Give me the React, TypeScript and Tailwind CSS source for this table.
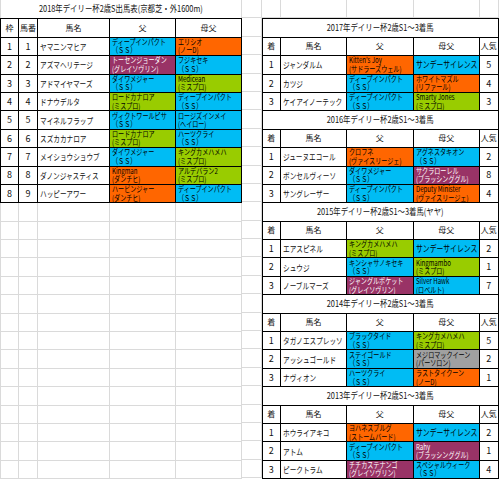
import React from "react";

type Sire = [string, string, string];

const colorClass: Record<string, string> = {
  c: "bg-[#00bcf4] text-black",
  o: "bg-[#ff6600] text-black",
  g: "bg-[#99cc00] text-black",
  p: "bg-[#993366] text-white",
  y: "bg-[#a0a0a0] text-black",
};

const SS = "（ＳＳ）";

const leftRows: [string, string, string, Sire, Sire][] = [
  ["1", "1", "ヤマニンマヒア", ["ディープインパクト", SS, "c"], ["エリシオ", "(ノーD)", "o"]],
  ["2", "2", "アズマヘリテージ", ["トーセンジョーダン", "(グレイソヴリン)", "p"], ["フジキセキ", SS, "c"]],
  ["3", "3", "アドマイヤマーズ", ["ダイワメジャー", SS, "c"], ["Medicean", "(ミスプロ)", "g"]],
  ["4", "4", "ドナウデルタ", ["ロードカナロア", "(ミスプロ)", "g"], ["ディープインパクト", SS, "c"]],
  ["5", "5", "マイネルフラップ", ["ヴィクトワールピサ", SS, "c"], ["ロージズインメイ", "(ヘイロー)", "c"]],
  ["6", "6", "スズカカナロア", ["ロードカナロア", "(ミスプロ)", "g"], ["ハーツクライ", SS, "c"]],
  ["7", "7", "メイショウショウブ", ["ダイワメジャー", SS, "c"], ["キングカメハメハ", "(ミスプロ)", "g"]],
  ["8", "8", "ダノンジャスティス", ["Kingman", "(ダンチヒ)", "o"], ["アルデバラン2", "(ミスプロ)", "g"]],
  ["8", "9", "ハッピーアワー", ["ハービンジャー", "(ダンチヒ)", "o"], ["ディープインパクト", SS, "c"]],
];

type RRow = [string, string, Sire, Sire, string];

const blocks: { title: string; rows: RRow[] }[] = [
  {
    title: "2017年デイリー杯2歳S1～3着馬",
    rows: [
      ["1", "ジャンダルム", ["Kitten's Joy", "(サドラーズウェル)", "o"], ["サンデーサイレンス", "", "c"], "5"],
      ["2", "カツジ", ["ディープインパクト", SS, "c"], ["ホワイトマズル", "(リファール)", "o"], "4"],
      ["3", "ケイアイノーテック", ["ディープインパクト", SS, "c"], ["Smarty Jones", "(ミスプロ)", "g"], "3"],
    ],
  },
  {
    title: "2016年デイリー杯2歳S1～3着馬",
    rows: [
      ["1", "ジューヌエコール", ["クロフネ", "(ヴァイスリージェ)", "o"], ["アグネスタキオン", SS, "c"], "2"],
      ["2", "ボンセルヴィーソ", ["ダイワメジャー", SS, "c"], ["サクラローレル", "(ブラッシンググル)", "p"], "8"],
      ["3", "サングレーザー", ["ディープインパクト", SS, "c"], ["Deputy Minister", "(ヴァイスリージェ)", "o"], "4"],
    ],
  },
  {
    title: "2015年デイリー杯2歳S1～3着馬(ヤヤ)",
    rows: [
      ["1", "エアスピネル", ["キングカメハメハ", "(ミスプロ)", "g"], ["サンデーサイレンス", "", "c"], "2"],
      ["2", "シュウジ", ["キンシャサノキセキ", SS, "c"], ["Kingmambo", "(ミスプロ)", "g"], "1"],
      ["3", "ノーブルマーズ", ["ジャングルポケット", "(グレイソヴリン)", "p"], ["Silver Hawk", "(ロベルト)", "c"], "7"],
    ],
  },
  {
    title: "2014年デイリー杯2歳S1～3着馬",
    rows: [
      ["1", "タガノエスプレッソ", ["ブラックタイド", SS, "c"], ["キングカメハメハ", "(ミスプロ)", "g"], "5"],
      ["2", "アッシュゴールド", ["ステイゴールド", SS, "c"], ["メジロマックイーン", "(パーソロン)", "y"], "2"],
      ["3", "ナヴィオン", ["ハーツクライ", SS, "c"], ["ラストタイクーン", "(ノーD)", "o"], "1"],
    ],
  },
  {
    title: "2013年デイリー杯2歳S1～3着馬",
    rows: [
      ["1", "ホウライアキコ", ["ヨハネスブルグ", "(ストームバード)", "o"], ["サンデーサイレンス", "", "c"], "2"],
      ["2", "アトム", ["ディープインパクト", SS, "c"], ["Rahy", "(ブラッシンググル)", "p"], "1"],
      ["3", "ピークトラム", ["チチカステナンゴ", "(グレイソヴリン)", "p"], ["スペシャルウィーク", SS, "c"], "4"],
    ],
  },
];

function SireCell({ s }: { s: Sire }) {
  const [a, b, c] = s;
  if (!b) {
    return (
      <div className={`${colorClass[c]} border-r border-b border-black flex items-center pl-[2px] text-[9px] leading-[10px] whitespace-nowrap overflow-hidden`}>
        <span className="inline-block origin-left scale-x-[0.76]">{a}</span>
      </div>
    );
  }
  return (
    <div className={`${colorClass[c]} border-r border-b border-black flex flex-col justify-center items-start pl-[2px] text-[8px] leading-[8.5px] whitespace-nowrap overflow-hidden`}>
      <span className="inline-block origin-left scale-x-[0.76]">{a}</span>
      <span className="inline-block origin-left scale-x-[0.76]">{b}</span>
    </div>
  );
}

const bk = "border-r border-b border-black flex items-center";
const gl = "border-r border-b border-[#dadada]";

function Name({ t }: { t: string }) {
  return (
    <div className={`${bk} pl-[2px] whitespace-nowrap overflow-hidden text-[8.5px]`}>
      <span className="inline-block origin-left scale-x-[0.78]">{t}</span>
    </div>
  );
}

function Head({ t }: { t: string }) {
  return <div className={`${bk} justify-center text-[8px] whitespace-nowrap`}>{t}</div>;
}

function Num({ t }: { t: string }) {
  return <div className={`${bk} justify-center text-[9px]`}>{t}</div>;
}

function Title({ t }: { t: string }) {
  return (
    <span className="inline-block origin-center scale-x-[0.82] whitespace-nowrap text-[9px]">{t}</span>
  );
}

export default function App() {
  return (
    <div className="flex w-[499px] h-[479px] overflow-hidden bg-white text-[#111] [font-family:'Noto_Sans_CJK_JP','Noto_Sans',sans-serif] text-[9px]">
      {/* left */}
      <div className="w-[242px] shrink-0 flex flex-col">
        <div className="h-[18.4px] shrink-0 flex items-center justify-center border-r border-l border-[#dadada]">
          <Title t="2018年デイリー杯2歳S出馬表(京都芝・外1600m)" />
        </div>
        <div className="border-l border-t border-black shrink-0">
          <div className="grid grid-cols-[18px_19px_72px_66px_66px] h-[18.4px]">
            <Head t="枠" />
            <Head t="馬番" />
            <Head t="馬名" />
            <Head t="父" />
            <Head t="母父" />
          </div>
          {leftRows.map((r, i) => (
            <div key={i} className="grid grid-cols-[18px_19px_72px_66px_66px] h-[18.4px]">
              <Num t={r[0]} />
              <Num t={r[1]} />
              <Name t={r[2]} />
              <SireCell s={r[3]} />
              <SireCell s={r[4]} />
            </div>
          ))}
        </div>
        {Array.from({ length: 15 }).map((_, i) => (
          <div key={i} className="grid grid-cols-[19px_19px_72px_66px_66px] h-[18.4px] shrink-0">
            <div className={`${gl} border-l`} />
            <div className={gl} />
            <div className={gl} />
            <div className={gl} />
            <div className={gl} />
          </div>
        ))}
      </div>
      {/* spacer column */}
      <div className="w-[19.5px] shrink-0 flex flex-col">
        {Array.from({ length: 26 }).map((_, i) => (
          <div key={i} className={`h-[18.4px] shrink-0 ${gl}`} />
        ))}
      </div>
      {/* right */}
      <div className="w-[237px] shrink-0 flex flex-col">
        <div className="grid grid-cols-[19.5px_66px_66.5px_66.5px_18.5px] h-[18.4px] shrink-0">
          <div className={gl} />
          <div className={gl} />
          <div className={gl} />
          <div className={gl} />
          <div className={gl} />
        </div>
        <div className="border-l border-t border-black shrink-0">
          {blocks.map((b, bi) => (
            <div key={bi}>
              <div className={`h-[18.4px] ${bk} justify-center`}>
                <Title t={b.title} />
              </div>
              <div className="grid grid-cols-[18.5px_66px_66.5px_66.5px_18.5px] h-[18.4px]">
                <Head t="着" />
                <Head t="馬名" />
                <Head t="父" />
                <Head t="母父" />
                <Head t="人気" />
              </div>
              {b.rows.map((r, ri) => (
                <div key={ri} className="grid grid-cols-[18.5px_66px_66.5px_66.5px_18.5px] h-[18.4px]">
                  <Num t={r[0]} />
                  <Name t={r[1]} />
                  <SireCell s={r[2]} />
                  <SireCell s={r[3]} />
                  <Num t={r[4]} />
                </div>
              ))}
            </div>
          ))}
        </div>
      </div>
    </div>
  );
}
